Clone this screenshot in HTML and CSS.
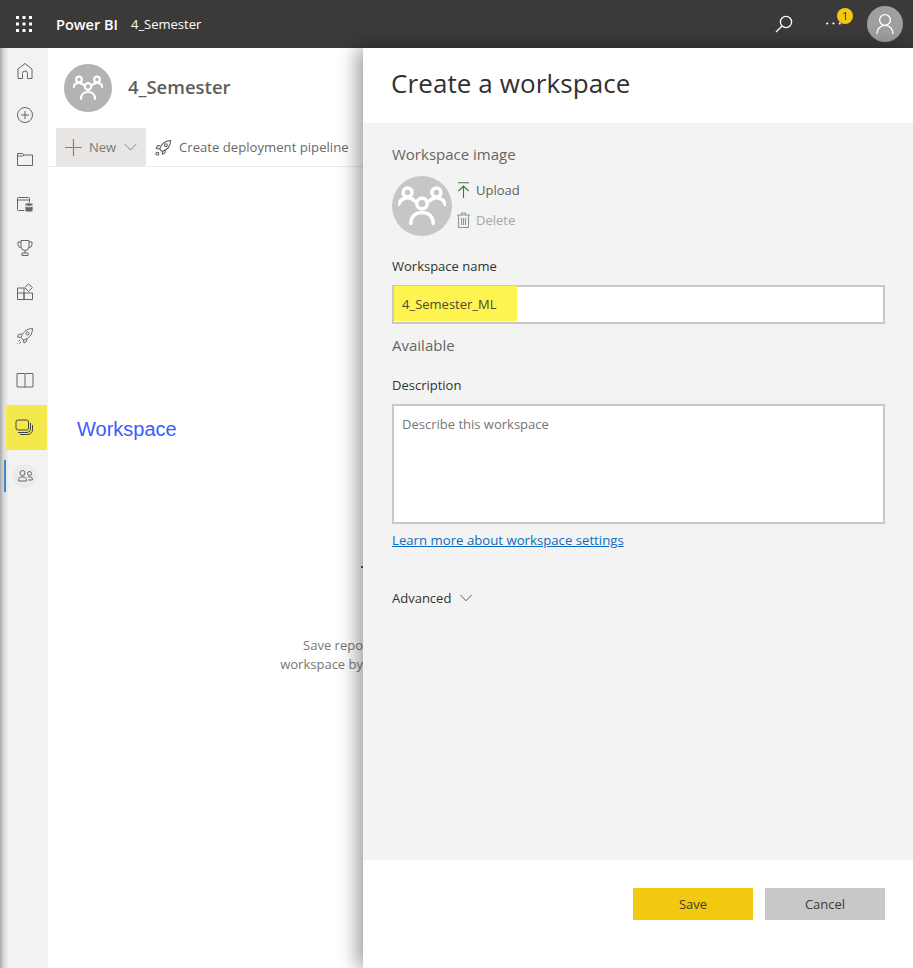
FILE: index.html
```html
<!DOCTYPE html>
<html>
<head>
  <meta charset="UTF-8" />
  <title>Create a workspace</title>
  <link rel="stylesheet" href="styles.css">
</head>
<body>

  <header class="topbar">
    <svg class="waffle" width="16" height="16" viewBox="0 0 16 16" fill="#fff">
      <rect x="0" y="0" width="3" height="3"/><rect x="6.500" y="0" width="3" height="3"/><rect x="13" y="0" width="3" height="3"/>
      <rect x="0" y="6.500" width="3" height="3"/><rect x="6.500" y="6.500" width="3" height="3"/><rect x="13" y="6.500" width="3" height="3"/>
      <rect x="0" y="13" width="3" height="3"/><rect x="6.500" y="13" width="3" height="3"/><rect x="13" y="13" width="3" height="3"/>
    </svg>
    <span class="brand">Power BI</span>
    <span class="crumb">4_Semester</span>
    <div class="topbar-right">
      <svg class="search" width="18" height="18" viewBox="0 0 18 18" fill="none" stroke="#fff" stroke-width="1.300">
        <circle cx="11" cy="7" r="5.600"/><path d="M7 11 1 17"/>
      </svg>
      <div class="more">
        <svg class="dots" width="15" height="3" viewBox="0 0 15 3" fill="#fff"><circle cx="1.200" cy="1.500" r="1.100"/><circle cx="7.500" cy="1.500" r="1.100"/><circle cx="13.800" cy="1.500" r="1.100"/></svg>
        <span class="badge">1</span>
      </div>
      <div class="me">
        <svg width="20" height="22" viewBox="0 0 20 22" fill="none" stroke="#fff" stroke-width="1.400">
          <circle cx="10" cy="7" r="5.400"/><path d="M2 21c0-5 3.400-8.600 8-8.600s8 3.600 8 8.600"/>
        </svg>
      </div>
    </div>
  </header>

  <div class="page">
    <nav class="rail">
      <div class="rail-item">
        <svg width="18" height="18" viewBox="0 0 18 18"><path d="M2 16.500V7l7-5.500L16 7v9.500h-4.500v-5a2.500 2.500 0 0 0-5 0v5z"/></svg>
      </div>
      <div class="rail-item">
        <svg width="18" height="18" viewBox="0 0 18 18"><circle cx="9" cy="9" r="7.500"/><path d="M9 5v8M5 9h8"/></svg>
      </div>
      <div class="rail-item">
        <svg width="18" height="18" viewBox="0 0 18 18"><path d="M1.500 15.500v-12h5l1.500 1.500h8.500v10.500z"/><path d="M1.500 6h5l1.500-1"/></svg>
      </div>
      <div class="rail-item">
        <svg width="18" height="18" viewBox="0 0 18 18"><path d="M8.500 15.500H2.500a1 1 0 0 1-1-1v-11a1 1 0 0 1 1-1h10a1 1 0 0 1 1 1V7M1.500 5h12"/><ellipse class="fill" cx="13" cy="9.500" rx="4" ry="1.800"/><path class="fill" d="M9 11c1.200 1.100 6.800 1.100 8 0v5c-1.200 1.400-6.800 1.400-8 0z"/></svg>
      </div>
      <div class="rail-item">
        <svg width="18" height="18" viewBox="0 0 18 18"><path d="M5 1.500h8v6a4 4 0 0 1-8 0zM5 3H2v2.500A3 3 0 0 0 5 8.500M13 3h3v2.500a3 3 0 0 1-3 3M9 11.500V14M6 16.500v-2.500h6v2.500z"/></svg>
      </div>
      <div class="rail-item">
        <svg width="18" height="18" viewBox="0 0 18 18"><path d="M1.500 5h6.500v11.500H1.500zM8 10h8.500v6.500H8zM1.500 10H8M12.500 .8l3.800 3.800-3.800 3.800-3.800-3.800z"/></svg>
      </div>
      <div class="rail-item">
        <svg width="18" height="18" viewBox="0 0 18 18"><path d="M6.500 12.500 5 10.500C6.500 5.500 10 2 16.500 1.500 16.500 8 12.500 11.500 8 13zM5.500 7 2.500 7.500 1.500 10l3 .5M11 11.500l-.5 3-2.500 1.500-.5-3"/><circle cx="11.500" cy="6.500" r="1.500"/><path d="M4 13l-1.500 1.500M5 15l-1.500 1.500M2 16l-.5.500"/></svg>
      </div>
      <div class="rail-item">
        <svg width="18" height="18" viewBox="0 0 18 18"><path d="M1 2.500h7.200a.8.800 0 0 1 .8.800.8.800 0 0 1 .8-.8H17v13.500H9.800a.8.800 0 0 0-.8.500.8.800 0 0 0-.8-.5H1zM9 3.300V16"/></svg>
      </div>
      <div class="rail-item rail-workspaces">
        <svg width="18" height="18" viewBox="0 0 18 18"><rect x="1" y="2" width="12.500" height="10" rx="2"/><path d="M3 14.500h9a3.500 3.500 0 0 0 3.500-3.500V5M5 16.500h8a4.500 4.500 0 0 0 4.500-4.500V7"/></svg>
      </div>
      <div class="rail-item rail-current">
        <span class="current-bar"></span>
        <span class="current-bg">
          <svg width="15" height="12" viewBox="0 0 15 12"><circle cx="4.500" cy="3" r="2.500"/><circle cx="11.500" cy="3.500" r="2"/><path d="M.7 11V9.500C.7 8 2 7 3 7h3c1 0 2.300 1 2.300 2.500V11zM10 7h2.500c1 0 1.800.8 1.800 1.800V10H10"/></svg>
        </span>
      </div>
    </nav>

    <main class="content">
      <div class="ws-head">
        <div class="ws-avatar">
          <svg width="30" height="30" viewBox="0 0 30 30"><use href="#people"/></svg>
        </div>
        <h2 class="ws-title">4_Semester</h2>
      </div>
      <div class="toolbar">
        <button class="btn-new">
          <svg width="17" height="17" viewBox="0 0 17 17" stroke="#a8794f" stroke-width="1.200"><path d="M8.500 0v17M0 8.500h17"/></svg>
          <span>New</span>
          <svg width="13" height="8" viewBox="0 0 13 8" fill="none" stroke="#8a8886"><path d="M.5.800 6.500 7l6-6.200"/></svg>
        </button>
        <div class="tool-deploy">
          <svg width="17" height="17" viewBox="0 0 18 18" fill="none" stroke="#555" stroke-width="1.100"><path d="M6.500 12.500 5 10.500C6.500 5.500 10 2 16.500 1.500 16.500 8 12.500 11.500 8 13zM5.500 7 2.500 7.500 1.500 10l3 .5M11 11.500l-.5 3-2.500 1.500-.5-3"/><circle cx="11.500" cy="6.500" r="1.500"/><circle cx="2.500" cy="15.500" r="1.500"/></svg>
          <span>Create deployment pipeline</span>
        </div>
      </div>
      <div class="empty">
        <p>Save repo<br>workspace by</p>
      </div>
      <span class="empty-dot"></span>
      <div class="note">Workspace</div>
    </main>
  </div>

  <aside class="panel">
    <h1 class="panel-title">Create a workspace</h1>
    <div class="panel-body">
      <div class="section-label">Workspace image</div>
      <div class="image-row">
        <div class="image-avatar">
          <svg width="48" height="48" viewBox="0 0 30 30"><use href="#people"/></svg>
        </div>
        <div class="image-actions">
          <div class="action">
            <svg width="13" height="17" viewBox="0 0 13 17" fill="none" stroke="#41773f" stroke-width="1.100"><path d="M1 .8h11M6.500 16V4M1.500 9l5-5 5 5"/></svg>
            <span>Upload</span>
          </div>
          <div class="action action-off">
            <svg width="13" height="16" viewBox="0 0 13 16" fill="none" stroke="#8a9a8c" stroke-width="1.100"><path d="M0 3h13M4.500 3V1h4v2M1.500 3v12.500h10V3M4.500 6v7M6.500 6v7M8.500 6v7"/></svg>
            <span>Delete</span>
          </div>
        </div>
      </div>
      <label class="field-label field-name">Workspace name</label>
      <div class="name-box"><span class="name-mark">4_Semester_ML</span></div>
      <div class="section-label available">Available</div>
      <label class="field-label field-desc">Description</label>
      <div class="desc-box">Describe this workspace</div>
      <a class="learn" href="#">Learn more about workspace settings</a>
      <div class="advanced">
        <span>Advanced</span>
        <svg width="12" height="8" viewBox="0 0 12 8" fill="none" stroke="#605e5c"><path d="M.5 1 6 6.800 11.500 1"/></svg>
      </div>
    </div>
    <footer class="panel-foot">
      <button class="btn btn-save">Save</button>
      <button class="btn btn-cancel">Cancel</button>
    </footer>
  </aside>

  <svg class="defs" width="0" height="0">
    <symbol id="people" viewBox="0 0 30 30">
      <g fill="none" stroke="#fff" stroke-width="2.200" stroke-linecap="round">
        <circle cx="15" cy="13.500" r="3.300"/>
        <path d="M8 26c0-4.500 3-7 7-7s7 2.500 7 7"/>
        <circle cx="6" cy="6.500" r="2.800"/>
        <circle cx="24" cy="6.500" r="2.800"/>
        <path d="M.5 14c.5-2.500 3-4.200 5.500-4.200 1.800 0 3.200.8 4.300 2M29.500 14c-.5-2.500-3-4.200-5.500-4.200-1.800 0-3.200.8-4.300 2"/>
      </g>
    </symbol>
  </svg>

</body>
</html>
```

FILE: styles.css
```css
* {
  box-sizing: border-box;
}
html, body {
  height: 100%;
}
body {
  margin: 0;
  display: flex;
  flex-direction: column;
  overflow: hidden;
  font-family: "Open Sans", "Noto Sans", Arial, sans-serif;
  color: #605e5c;
  background: #fff;
}

/* top bar */
.topbar {
  height: 48px;
  flex: none;
  display: flex;
  align-items: center;
  padding-left: 16px;
  background: #3b3a39;
  color: #fff;
}
.waffle {
  margin-right: 24px;
}
.brand {
  font-size: 14.500px;
  font-weight: 600;
  margin-right: 13px;
}
.crumb {
  font-size: 13px;
}
.topbar-right {
  margin-left: auto;
  display: flex;
  align-items: center;
  padding-right: 10px;
}
.search {
  margin-right: 22px;
}
.more {
  position: relative;
  width: 52px;
  height: 48px;
}
.dots {
  position: absolute;
  left: 11px;
  top: 22px;
}
.badge {
  position: absolute;
  left: 22px;
  top: 8px;
  width: 16px;
  height: 16px;
  border-radius: 50%;
  background: #f2c811;
  color: #252423;
  font-size: 10px;
  line-height: 16px;
  text-align: center;
}
.me {
  width: 36px;
  height: 36px;
  border-radius: 50%;
  background: #a19f9d;
  display: flex;
  align-items: center;
  justify-content: center;
}

/* left rail */
.page {
  flex: 1;
  display: flex;
  min-height: 0;
}
.rail {
  width: 48px;
  flex: none;
  padding-top: 1px;
  display: flex;
  flex-direction: column;
  background: linear-gradient(to right, #a9a9a9 0, #dcdcdc 4px, #f3f2f1 9px);
}
.rail-item {
  height: 44.2px;
  display: flex;
  align-items: center;
  justify-content: center;
  position: relative;
}
.rail-item svg {
  fill: none;
  stroke: #666;
  stroke-width: 1;
  margin-left: 1px;
}
.rail-item svg .fill {
  fill: #666;
  stroke: #f3f2f1;
  stroke-width: .8;
}
.rail-workspaces {
  height: 45px;
  margin: 2px 1px 0 6px;
  background: #f4e84d;
}
.rail-workspaces svg {
  stroke: #444;
  margin-left: -6px;
}
.rail-current {
  margin-top: 4px;
}
.current-bar {
  position: absolute;
  left: 4px;
  top: 6px;
  bottom: 6px;
  width: 2px;
  background: #3f87c6;
}
.current-bg {
  width: 24px;
  height: 24px;
  border-radius: 50%;
  background: #ebebeb;
  display: flex;
  align-items: center;
  justify-content: center;
  margin-left: 1px;
}

/* page behind the panel */
.content {
  flex: 1;
  position: relative;
  min-width: 0;
}
.ws-head {
  height: 80px;
  padding: 16px 0 0 16px;
  display: flex;
  align-items: flex-start;
  gap: 16px;
}
.ws-avatar {
  width: 48px;
  height: 48px;
  border-radius: 50%;
  background: #b3b3b3;
  display: flex;
  align-items: center;
  justify-content: center;
}
.ws-title {
  margin: 0;
  font-size: 18.500px;
  font-weight: 600;
  line-height: 46px;
  color: #605e5c;
}
.toolbar {
  height: 39px;
  padding-left: 8px;
  display: flex;
  align-items: flex-start;
  border-bottom: 1px solid #edebe9;
}
.btn-new {
  height: 38px;
  width: 90px;
  padding: 0 8px 0 9px;
  border: 0;
  border-radius: 2px;
  background: #e8e6e4;
  color: #7a7876;
  font: inherit;
  font-size: 13px;
  display: flex;
  align-items: center;
}
.btn-new span {
  margin: 0 8px 0 7px;
}
.tool-deploy {
  height: 38px;
  margin-left: 9px;
  display: flex;
  align-items: center;
  gap: 7px;
  font-size: 13.150px;
  white-space: nowrap;
  color: #6b6967;
}
.empty {
  width: 315px;
  padding-top: 469px;
  text-align: right;
}
.empty p {
  margin: 0;
  font-size: 13px;
  line-height: 19px;
  color: #777;
}
.empty-dot {
  position: absolute;
  left: 313px;
  top: 518px;
  width: 2px;
  height: 2px;
  background: #555;
}
.note {
  position: absolute;
  left: 29px;
  top: 370px;
  font-family: "Liberation Sans", Arial, sans-serif;
  font-size: 20px;
  color: #3d5afe;
}

/* create workspace panel */
.panel {
  position: absolute;
  top: 48px;
  right: 0;
  bottom: 0;
  width: 550px;
  display: flex;
  flex-direction: column;
  background: #fff;
  box-shadow: -6px 0 18px rgba(0, 0, 0, .38);
}
.panel-title {
  height: 75px;
  flex: none;
  margin: 0;
  padding: 0 0 5px 28px;
  display: flex;
  align-items: center;
  font-size: 26px;
  font-weight: 400;
  letter-spacing: .1px;
  color: #323130;
}
.panel-body {
  flex: 1;
  padding: 20px 28px 0 29px;
  background: #f3f3f3;
}
.section-label {
  font-size: 15px;
  line-height: 22px;
  color: #666;
}
.image-row {
  margin-top: 11px;
  display: flex;
  gap: 5px;
}
.image-avatar {
  width: 60px;
  height: 60px;
  border-radius: 50%;
  background: #c6c6c6;
  display: flex;
  align-items: center;
  justify-content: center;
}
.image-actions {
  margin-top: -1px;
}
.action {
  height: 30px;
  display: flex;
  align-items: center;
  gap: 6px;
  font-size: 13px;
  color: #605e5c;
}
.action-off {
  color: #a6a6a6;
}
.field-label {
  display: block;
  font-size: 13px;
  line-height: 18px;
  color: #323130;
}
.field-name {
  margin-top: 21px;
}
.name-box {
  margin-top: 10px;
  width: 493px;
  height: 39px;
  border: 2px solid #c8c8c8;
  background: #fff;
}
.name-mark {
  display: block;
  width: 123px;
  height: 35px;
  margin-top: -1px;
  padding-left: 8px;
  background: #fff44f;
  font-size: 13px;
  line-height: 37px;
  color: #4a4a30;
}
.available {
  margin-top: 10px;
}
.field-desc {
  margin-top: 20px;
}
.desc-box {
  margin-top: 10px;
  width: 493px;
  height: 120px;
  padding: 9px 8px;
  border: 2px solid #c8c8c8;
  background: #fff;
  font-size: 13px;
  color: #757575;
}
.learn {
  display: block;
  margin-top: 7px;
  font-size: 13.200px;
  line-height: 18px;
  color: #0f6cbd;
}
.advanced {
  margin-top: 40px;
  display: flex;
  align-items: center;
  gap: 9px;
  font-size: 13px;
  line-height: 18px;
  color: #323130;
}
.panel-foot {
  height: 108px;
  flex: none;
  padding: 28px 28px 0 0;
  display: flex;
  justify-content: flex-end;
  gap: 12px;
}
.btn {
  width: 120px;
  height: 32px;
  border: 0;
  font: inherit;
  font-size: 13px;
  color: #3b3a39;
}
.btn-save {
  background: #f2c811;
}
.btn-cancel {
  background: #c8c8c8;
}
.defs {
  position: absolute;
}
```
